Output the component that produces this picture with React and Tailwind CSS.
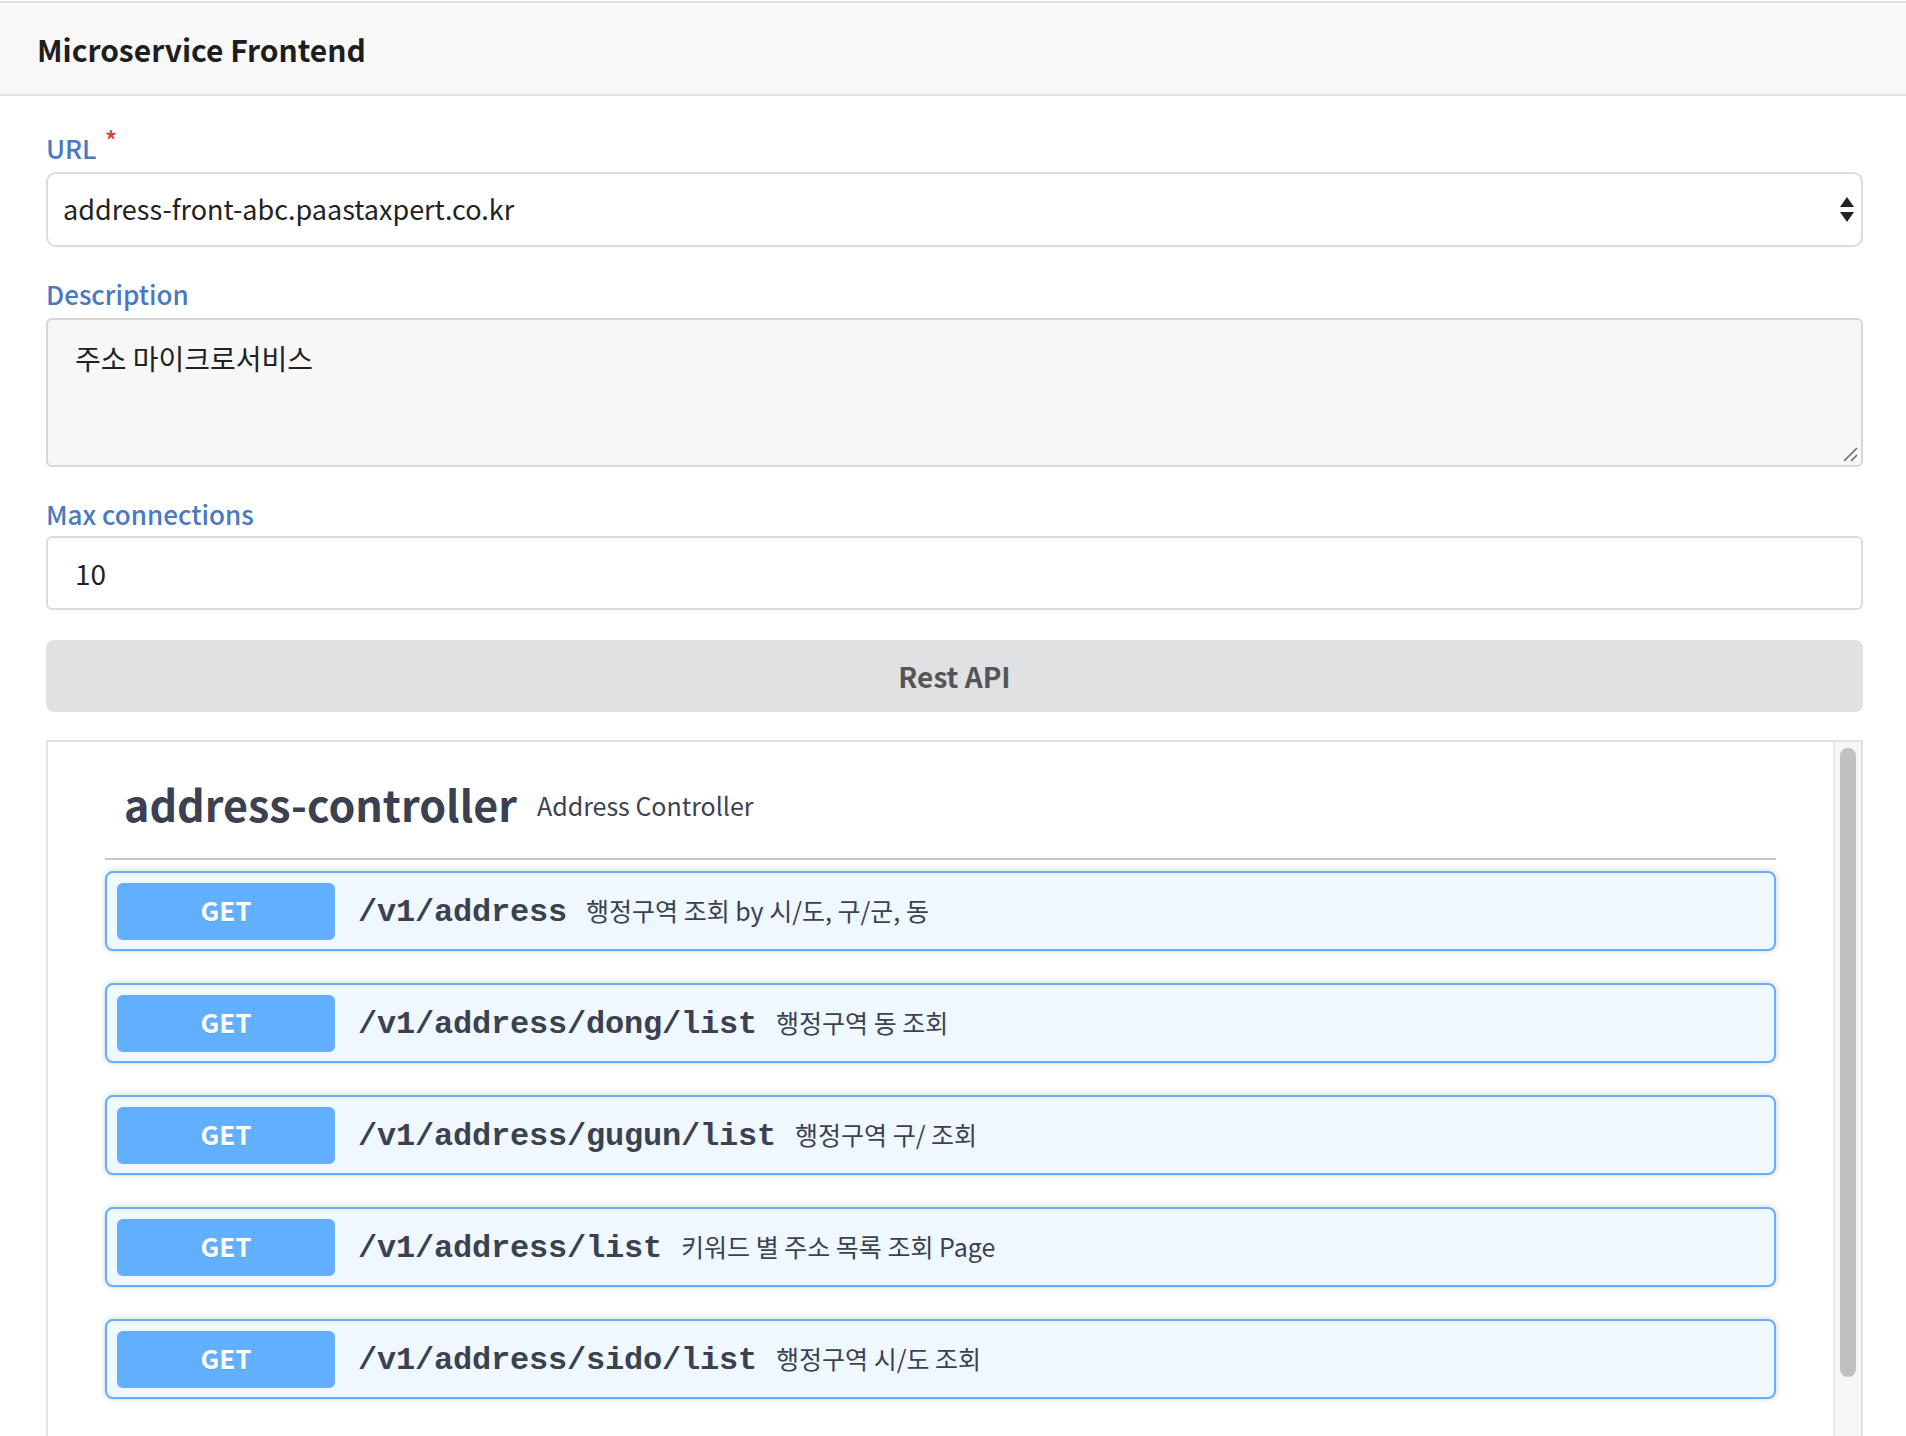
const ops = [
  { path: "/v1/address", desc: "행정구역 조회 by 시/도, 구/군, 동" },
  { path: "/v1/address/dong/list", desc: "행정구역 동 조회" },
  { path: "/v1/address/gugun/list", desc: "행정구역 구/ 조회" },
  { path: "/v1/address/list", desc: "키워드 별 주소 목록 조회 Page" },
  { path: "/v1/address/sido/list", desc: "행정구역 시/도 조회" },
];

function Label({ children, required }) {
  return (
    <div className="h-[36px] text-[26px] leading-[36px] font-medium text-[#4a78c2]">
      {children}
      {required && <span className="relative -top-[8px] ml-[8px] text-[#d64541]">*</span>}
    </div>
  );
}

function OpBlock({ path, desc }) {
  return (
    <div className="flex h-[80px] items-center rounded-[8px] border-2 border-[#61affe] bg-[#eff7ff] px-[10px] shadow-[0_0_6px_rgba(0,0,0,0.19)]">
      <div className="flex h-[57px] w-[218px] items-center justify-center rounded-[6px] bg-[#61affe] pb-[3px] text-[26px] font-bold text-white [text-shadow:0_1px_0_rgba(0,0,0,0.1)]">
        GET
      </div>
      <span className="ml-[23px] pt-[4px] font-['Liberation_Mono',monospace] text-[32px] font-bold tracking-[-0.2px] text-[#3b4151]">
        {path}
      </span>
      <span className="ml-[19px] text-[25px] text-[#3b4151]">{desc}</span>
    </div>
  );
}

export default function App() {
  return (
    <div className="h-[1436px] overflow-hidden bg-white font-['Noto_Sans_CJK_KR',sans-serif] text-[#222]">
      <div className="mt-[1px] flex h-[95px] items-center border-y-2 border-[#e0e0e0] bg-[#f8f8f8] px-[37px] pt-[2px]">
        <h1 className="text-[30px] font-bold text-[#1e1e1e]">Microservice Frontend</h1>
      </div>

      <div className="pl-[46px] pr-[43px] pt-[34px]">
        <Label required>URL</Label>
        <div className="mt-[6px] flex h-[75px] items-center justify-between rounded-[10px] border-2 border-[#dcdcdc] bg-white pl-[15px] pr-[7px] text-[27px]">
          <span>address-front-abc.paastaxpert.co.kr</span>
          <svg width="14" height="26" viewBox="0 0 14 26">
            <path d="M7 0 L14 10 L0 10 Z" fill="#222" />
            <path d="M0 15 L14 15 L7 25 Z" fill="#222" />
          </svg>
        </div>

        <div className="mt-[29px]">
          <Label>Description</Label>
        </div>
        <div className="relative mt-[6px] h-[149px] rounded-[6px] border-2 border-[#d6d6d6] bg-[#f7f7f7] px-[27px] pt-[19px] text-[28px] leading-[39px]">
          주소 마이크로서비스
          <svg className="absolute bottom-[3px] right-[3px]" width="16" height="16" viewBox="0 0 16 16">
            <path d="M2 15 L15 2 M9 15 L15 9" stroke="#6b6b6b" strokeWidth="1.6" />
          </svg>
        </div>

        <div className="mt-[29px]">
          <Label>Max connections</Label>
        </div>
        <div className="mt-[4px] flex h-[74px] items-center rounded-[6px] border-2 border-[#dcdcdc] bg-white px-[27px] text-[28px]">
          10
        </div>

        <div className="mt-[30px] flex h-[72px] items-center justify-center rounded-[8px] bg-[#e0e1e3] text-[28px] font-bold text-[#555]">
          Rest API
        </div>

        <div className="mt-[28px] flex h-[800px] border-2 border-[#e2e2e2]">
          <div className="flex-1 px-[57px]">
            <div className="flex items-center border-b-2 border-[#c4c6cb] pb-[22px] pl-[19px] pt-[28px] text-[#3b4151]">
              <span className="text-[43px] font-bold leading-[66px]">address-controller</span>
              <span className="ml-[20px] mt-[6px] text-[25px]">Address Controller</span>
            </div>
            <div className="mt-[11px] flex flex-col gap-[32px]">
              {ops.map((op) => (
                <OpBlock key={op.path} {...op} />
              ))}
            </div>
          </div>
          <div className="w-[28px] border-l-2 border-[#e8e8e8] bg-[#f7f7f7] pl-[5px] pt-[6px]">
            <div className="h-[629px] w-[16px] rounded-full bg-[#c1c1c1]" />
          </div>
        </div>
      </div>
    </div>
  );
}
